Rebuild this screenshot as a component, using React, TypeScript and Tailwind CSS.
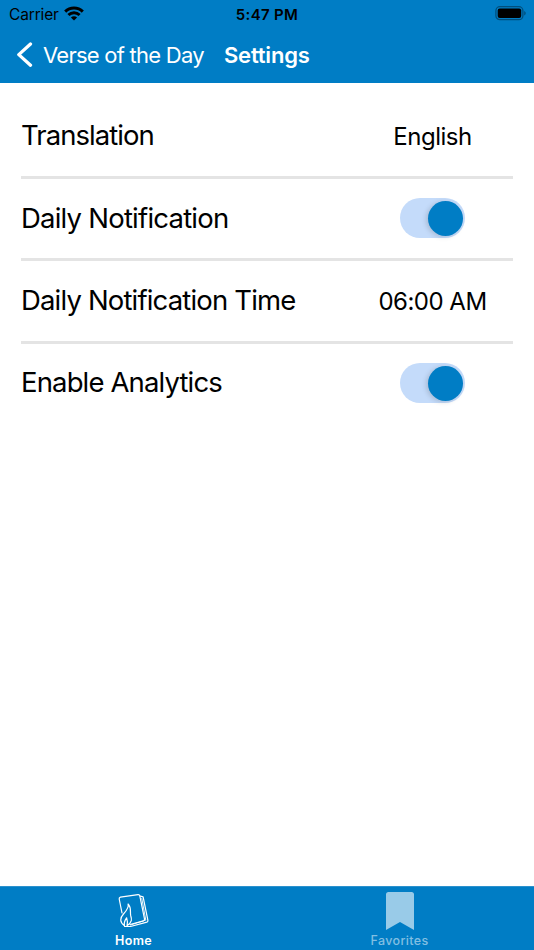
import type { ReactNode } from "react";

function Toggle() {
  return (
    <button
      role="switch"
      aria-checked="true"
      className="flex h-10 w-[65px] items-center justify-end rounded-full bg-[#c4dbfa] pr-[2px]"
    >
      <span className="size-[35px] rounded-full bg-[#007dc5] shadow-[-2px_1px_5px_rgba(0,0,0,0.15)]" />
    </button>
  );
}

function Row({ label, spacing, last, children }: { label: string; spacing: string; last?: boolean; children: ReactNode }) {
  return (
    <div className={`flex items-center justify-between ${last ? "h-[79px]" : "h-[82.5px] border-b-[3px] border-[#e4e4e4]"}`}>
      <span className={`whitespace-nowrap text-[27.5px] leading-none ${spacing}`}>{label}</span>
      <div className="flex w-[161px] items-center justify-center">{children}</div>
    </div>
  );
}

export default function App() {
  return (
    <div className="flex h-[950px] w-[534px] flex-col overflow-hidden bg-white font-['Inter',sans-serif] text-black">
      <header className="h-[83px] bg-[#007dc5]">
        <div className="grid h-7 grid-cols-3 items-center pl-[9px] pr-[8px] text-[15.5px] leading-none">
          <div className="flex items-center gap-[5px]">
            <span className="pt-px tracking-[-0.15px]">Carrier</span>
            <svg className="-mt-[2px]" width="20" height="15" viewBox="0 0 20 15" fill="none" stroke="#000" strokeWidth="3">
              <path d="M1.2 5.6C6 .9 14 .9 18.8 5.6" />
              <path d="M4.4 9c3.2-3 8-3 11.2 0" />
              <path d="M10 14.6l-3.1-3.2c1.7-1.6 4.5-1.6 6.2 0z" fill="#000" stroke="none" />
            </svg>
          </div>
          <span className="-ml-px text-center text-[15px] font-semibold tracking-[0.3px]">5:47 PM</span>
          <svg className="justify-self-end" width="31" height="16" viewBox="0 0 31 16">
            <rect x=".9" y=".7" width="27" height="13" rx="4" fill="none" stroke="#004f7d" strokeWidth="1.3" />
            <rect x="2.7" y="2.5" width="23.5" height="9.5" rx="2" />
            <path d="M29.2 5c2 .8 2 3.7 0 4.5z" fill="#004f7d" />
          </svg>
        </div>
        <div className="flex h-[54px] items-center whitespace-nowrap pl-[16px] text-[22px] leading-none text-white">
          <svg width="17" height="26" viewBox="0 0 17 26" fill="none" stroke="white" strokeWidth="3.3" strokeLinecap="round" strokeLinejoin="round">
            <path d="M14.5 2L2.8 12.6l11.7 10.6" />
          </svg>
          <span className="ml-[10px] w-[181px] tracking-[-0.75px]">Verse of the Day</span>
          <span className="tracking-[-0.2px] font-semibold">Settings</span>
        </div>
      </header>
      <main className="flex-1 px-[21px] pt-[13px]">
        <Row label="Translation" spacing="tracking-[-0.95px]">
          <span className="pt-[2px] text-[24px] leading-none tracking-[-0.5px]">English</span>
        </Row>
        <Row label="Daily Notification" spacing="tracking-[-0.78px]"><Toggle /></Row>
        <Row label="Daily Notification Time" spacing="tracking-[-0.84px]">
          <span className="pt-[2px] text-[24px] leading-none tracking-[-0.5px]">06:00 AM</span>
        </Row>
        <Row label="Enable Analytics" spacing="tracking-[-0.86px]" last><Toggle /></Row>
      </main>
      <nav className="grid h-[64px] grid-cols-2 border-t border-[#2b91cd] bg-[#007dc5] text-[12.5px] font-semibold leading-none text-white">
        <div className="flex flex-col items-center pt-[5px]">
          <svg width="32" height="38" viewBox="0 0 32 38" fill="none" stroke="white" strokeWidth="1.2" strokeLinejoin="round" strokeLinecap="round">
            <path d="M4 21L1.2 7Q1 5.6 2.4 5.2L20 2.6Q21.5 2.4 21.8 3.8L26.5 27Q26.7 28.4 25.5 28.8L12 32.5" />
            <path d="M22.3 4.2l2.8.6 4.8 23.6q.2 1.2-1 1.7L12.5 34.5H6.5" />
            <path d="M23.8 6.5l4 21.6L12.5 33" strokeWidth=".9" />
            <path d="M6.5 33.8C1.5 30 1.8 26 5.5 22c3.2-3.5 5.6-6.5 4.6-10 4 4.5 1.5 8 2.7 12 1 3 1.6 5.8-3.8 9.8 1-4 .3-6-.4-8-1.8 2.5-3 4.7-2.1 8z" />
          </svg>
          <span className="mt-[5px] tracking-[0.3px]">Home</span>
        </div>
        <div className="flex flex-col items-center pr-[2px] pt-[5px] text-[#82bfe2]">
          <svg width="28" height="38" viewBox="0 0 28 38">
            <path d="M2.5 0h23Q28 0 28 2.5V38L14 30 0 38V2.5Q0 0 2.5 0z" fill="#99cbe8" />
          </svg>
          <span className="mt-[5px] font-medium tracking-[0.35px]">Favorites</span>
        </div>
      </nav>
    </div>
  );
}
